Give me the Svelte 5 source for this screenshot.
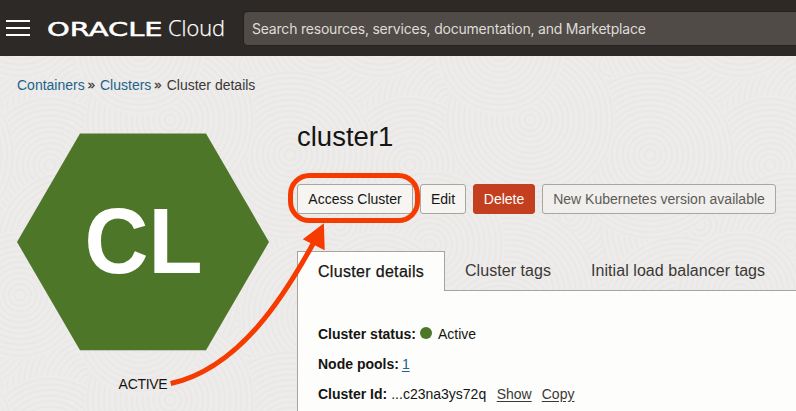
<script>
  const crumbs = ['Containers', 'Clusters'];
  const swirls = [
    [30, 10, 90], [130, 60, 100], [250, 170, 95], [20, 180, 100], [290, 20, 80], [190, 250, 90],
    [90, 120, 70], [0, 270, 80], [330, 110, 85], [110, 200, 75], [210, 75, 85], [60, 250, 65], [180, 5, 65]
  ];
  const layers = [];
  for (const [x, y, r] of swirls) {
    for (const dx of [-360, 0, 360]) {
      for (const dy of [-280, 0, 280]) layers.push([x + dx, y + dy, r]);
    }
  }
  const rings = (max) => Array.from({ length: Math.floor(max / 5.5) }, (_, i) => (i + 1) * 5.5);
</script>

<div class="page">
  <svg class="texture" width="796" height="411" aria-hidden="true">
    <defs>
      <pattern id="waves" width="360" height="280" patternUnits="userSpaceOnUse" patternTransform="translate(-40 45)">
        {#each layers as [x, y, r]}
          <circle cx={x} cy={y} {r} fill="#edecea" />
          {#each rings(r) as ring}
            <circle cx={x} cy={y} r={ring} fill="none" stroke="#e9e8e6" stroke-width="1.8" />
          {/each}
        {/each}
      </pattern>
    </defs>
    <rect width="796" height="411" fill="url(#waves)" />
  </svg>

  <header>
    <div class="menu"><i></i><i></i><i></i></div>
    <svg class="logo" width="178" height="24">
      <text class="oracle" x="0" y="19.5" textLength="115.5" lengthAdjust="spacingAndGlyphs">ORACLE</text>
      <text class="cloud" x="121" y="19.5" textLength="57" lengthAdjust="spacingAndGlyphs">Cloud</text>
    </svg>
    <div class="search">Search resources, services, documentation, and Marketplace</div>
  </header>

  <nav>
    {#each crumbs as crumb}
      <span class="link">{crumb}</span><span class="sep">»</span>
    {/each}
    <span>Cluster details</span>
  </nav>

  <main>
    <aside>
      <svg width="252" height="218">
        <polygon points="63,.5 189,.5 252,109 189,217.3 63,217.3 0,109" fill="#4e7629" />
        <text class="cl" x="67.5" y="140" textLength="118" lengthAdjust="spacingAndGlyphs">CL</text>
      </svg>
      <div class="state">ACTIVE</div>
    </aside>
    <section>
      <h1>cluster1</h1>
      <div class="buttons">
        <button class="access">Access Cluster</button>
        <button class="edit">Edit</button>
        <button class="delete">Delete</button>
        <button class="version">New Kubernetes version available</button>
      </div>
      <div class="tabs">
        <div class="tab active">Cluster details</div>
        <div class="tab tags">Cluster tags</div>
        <div class="tab lb">Initial load balancer tags</div>
      </div>
      <div class="panel">
        <div class="row"><b>Cluster status:</b><i class="dot"></i><span>Active</span></div>
        <div class="row"><b>Node pools:</b><u class="count">1</u></div>
        <div class="row"><b>Cluster Id:</b><span class="id">...c23na3ys72q</span><u>Show</u><u class="copy">Copy</u></div>
      </div>
    </section>
  </main>

  <svg class="callout" width="796" height="411" aria-hidden="true">
    <rect x="290.5" y="175.5" width="127" height="45" rx="19" fill="none" stroke="#f53b00" stroke-width="5" />
    <path d="M170.7 383.5C240 368 285 295 314 242" fill="none" stroke="#f53b00" stroke-width="5" />
    <path d="M323.9 223.3L302.8 239.3L324.7 250.3Z" fill="#f53b00" />
  </svg>
</div>

<style>
  :global(body) { margin: 0; }
  .page {
    position: relative; width: 796px; height: 411px; overflow: hidden; isolation: isolate;
    background: #edecea; color: #161513;
    font: 14px/18px "Liberation Sans", Arial, sans-serif;
  }
  .texture { position: absolute; inset: 0; z-index: -1; }
  .callout { position: absolute; inset: 0; pointer-events: none; }
  header { height: 56px; background: #2d2926; display: flex; align-items: center; }
  .menu { width: 24px; margin-left: 6px; display: flex; flex-direction: column; gap: 4px; }
  .menu i { height: 2px; background: #fff; }
  .menu i + i { margin-top: 1px; }
  .logo { margin-left: 16.5px; overflow: visible; }
  .logo text { fill: #fff; }
  .oracle { font: 400 19.5px "DejaVu Sans", sans-serif; stroke: #fff; stroke-width: .5px; }
  .cloud { font: 300 22px "Open Sans", sans-serif; stroke: #fff; stroke-width: .25px; }
  .search {
    flex: 1; height: 33px; margin-left: 19.5px; padding-left: 8px; box-sizing: border-box;
    border-radius: 4px 0 0 4px; background: #504b46; color: #dfdcd8; letter-spacing: -.21px;
    box-shadow: 0 0 0 1px #24201e; font: 14px/34px Inter, sans-serif; white-space: nowrap;
  }
  nav { display: flex; height: 18px; padding: 20px 0 0 17px; color: #3b3836; white-space: nowrap; }
  .link { color: #22638a; }
  .sep { width: 7px; margin: 0 5.3px 0 3px; font-size: 13px; -webkit-text-stroke: .3px #3b3836; }
  main { display: grid; grid-template-columns: 280px 1fr; padding-left: 17px; }
  aside { width: 252px; padding-top: 39px; }
  aside svg { display: block; }
  .cl { font: 700 92px "Liberation Sans", Arial, sans-serif; fill: #fff; }
  .state { margin-top: 24px; text-align: center; letter-spacing: -.3px; }
  section { padding-top: 26px; }
  h1 { margin: 0; font-size: 27.5px; line-height: 34px; font-weight: 400; }
  .buttons { display: flex; gap: 7px; margin-top: 30px; }
  button {
    height: 30px; padding: 0; border: 1px solid #a9a5a0; border-radius: 3px; box-sizing: border-box;
    background: #f6f5f2; color: #161513; font: inherit; white-space: nowrap;
  }
  .access { width: 116px; }
  .edit { width: 46px; }
  .delete { width: 62px; background: #c43f20; border-color: #c43f20; color: #fff; }
  .version { width: 234px; background: #f0efed; color: #5e5b57; }
  .tabs { display: flex; height: 40px; margin-top: 37px; box-shadow: inset 0 -1px #aaa39b; font-size: 16px; line-height: 39px; white-space: nowrap; }
  .tab { color: #3b3836; letter-spacing: .06px; }
  .tab.active {
    width: 148px; height: 40px; box-sizing: border-box; padding-left: 20px; background: #fdfdfc;
    border: 1px solid #aaa39b; border-bottom: 0; color: #161513; -webkit-text-stroke: .25px #161513;
    letter-spacing: .32px;
  }
  .tags { width: 126px; padding-left: 20px; box-sizing: border-box; }
  .lb { padding-left: 20px; }
  .panel { height: 120px; padding: 28px 0 0 20px; box-sizing: border-box; background: #fdfdfc; border-left: 1px solid #aaa39b; }
  .row { display: flex; align-items: center; height: 30px; white-space: nowrap; }
  .row > span, .row > u { margin-top: -1px; }
  .dot { width: 12px; height: 12px; margin: -2px 6px 0 4px; border-radius: 50%; background: #4e7629; }
  .row > .count { margin-left: 3px; color: #22638a; }
  .row > .id { margin: 0 10.5px 0 4px; }
  .row > .copy { margin-left: 10px; }
  u { color: #3b3836; text-underline-offset: 2px; }
</style>
